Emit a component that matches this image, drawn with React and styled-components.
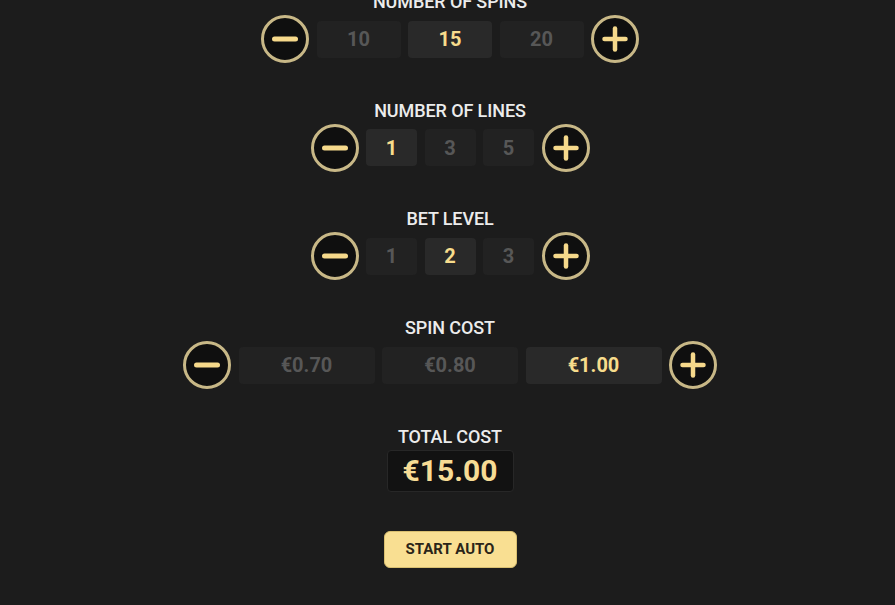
import React from "react";
import styled, { createGlobalStyle } from "styled-components";

const Global = createGlobalStyle`
  html, body { margin: 0; padding: 0; background: #1c1c1c; overflow: hidden; }
  body { font-family: Roboto, "Liberation Sans", sans-serif; }
`;

const Page = styled.div`
  width: 895px;
  height: 605px;
  background: #1c1c1c;
  display: flex;
  flex-direction: column;
  align-items: center;
  padding-left: 5px;
  box-sizing: border-box;
  overflow: hidden;
`;

const Stack = styled.div`
  display: flex;
  flex-direction: column;
  align-items: center;
  gap: 37.7px;
  margin-top: -8px;
`;

const Section = styled.div`
  display: flex;
  flex-direction: column;
  align-items: center;
  gap: ${(p) => p.$gap ?? 3}px;
`;

const Title = styled.div`
  height: 20px;
  line-height: 20px;
  font-size: 18px;
  font-weight: 500;
  color: #ececec;
  text-transform: uppercase;
  letter-spacing: -0.1px;
`;

const Row = styled.div`
  display: flex;
  align-items: center;
  gap: 7.5px;
  height: 48px;
`;

const Circle = styled.button`
  width: 48px;
  height: 48px;
  border-radius: 50%;
  border: 3px solid #c8b887;
  background: #0f0f0f;
  box-sizing: border-box;
  display: flex;
  align-items: center;
  justify-content: center;
  padding: 0;
  cursor: pointer;
`;

const Option = styled.div`
  width: ${(p) => p.$w}px;
  height: 37px;
  border-radius: 4px;
  background: ${(p) => (p.$active ? "#292929" : "#222222")};
  color: ${(p) => (p.$active ? "#f7dc8c" : "#575757")};
  font-size: 20px;
  font-weight: 700;
  display: flex;
  align-items: center;
  justify-content: center;
`;

const TotalBox = styled.div`
  width: 127px;
  height: 42px;
  flex: none;
  box-sizing: border-box;
  background: #121212;
  border: 1px solid #272727;
  border-radius: 4px;
  color: #f7dc95;
  font-size: 30px;
  font-weight: 700;
  display: flex;
  align-items: center;
  justify-content: center;
`;

const StartButton = styled.button`
  margin-top: 1.5px;
  width: 133px;
  height: 37px;
  flex: none;
  border-radius: 6px;
  border: 1px solid #d9bf70;
  background: #f9df92;
  color: #2b2518;
  font-family: Roboto, "Liberation Sans", sans-serif;
  font-size: 15px;
  font-weight: 700;
  cursor: pointer;
`;

const Minus = () => (
  <svg width="26" height="26" viewBox="0 0 26 26">
    <line x1="2.5" y1="13" x2="23.5" y2="13" stroke="#f6d98b" strokeWidth="5" strokeLinecap="round" />
  </svg>
);

const Plus = () => (
  <svg width="26" height="26" viewBox="0 0 26 26">
    <line x1="2.5" y1="13" x2="23.5" y2="13" stroke="#f6d98b" strokeWidth="4.5" strokeLinecap="round" />
    <line x1="13" y1="2.5" x2="13" y2="23.5" stroke="#f6d98b" strokeWidth="4.5" strokeLinecap="round" />
  </svg>
);

const Selector = ({ title, options, active, width }) => (
  <Section>
    <Title>{title}</Title>
    <Row>
      <Circle aria-label="decrease"><Minus /></Circle>
      {options.map((o) => (
        <Option key={o} $w={width} $active={o === active}>{o}</Option>
      ))}
      <Circle aria-label="increase"><Plus /></Circle>
    </Row>
  </Section>
);

export default function App() {
  return (
    <Page>
      <Global />
      <Stack>
        <Selector title="Number of spins" options={["10", "15", "20"]} active="15" width={84} />
        <Selector title="Number of lines" options={["1", "3", "5"]} active="1" width={51} />
        <Selector title="Bet level" options={["1", "2", "3"]} active="2" width={51} />
        <Selector title="Spin cost" options={["€0.70", "€0.80", "€1.00"]} active="€1.00" width={136} />
        <Section $gap={3}>
          <Title>Total cost</Title>
          <TotalBox>€15.00</TotalBox>
        </Section>
        <StartButton>START AUTO</StartButton>
      </Stack>
    </Page>
  );
}
